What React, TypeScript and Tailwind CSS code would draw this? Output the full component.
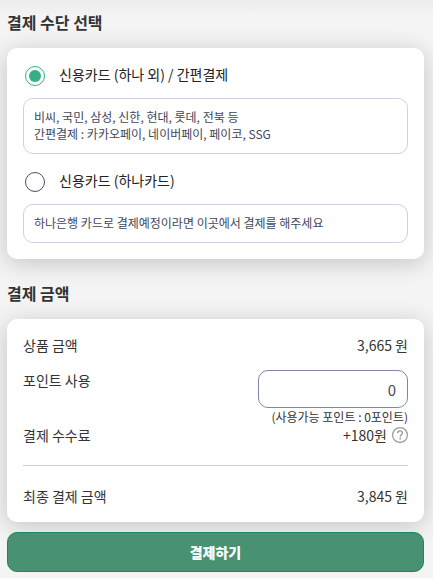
import { useState } from "react";

const methods = [
  {
    id: "general",
    label: "신용카드 (하나 외) / 간편결제",
    lines: [
      "비씨, 국민, 삼성, 신한, 현대, 롯데, 전북 등",
      "간편결제 : 카카오페이, 네이버페이, 페이코, SSG",
    ],
  },
  {
    id: "hana",
    label: "신용카드 (하나카드)",
    lines: ["하나은행 카드로 결제예정이라면 이곳에서 결제를 해주세요"],
  },
];

function PaymentMethods() {
  const [selected, setSelected] = useState("general");
  return (
    <section>
      <h2 className="text-base leading-6 font-bold">결제 수단 선택</h2>
      <div className="mt-3.5 flex flex-col gap-4 rounded-[10px] bg-white p-4 shadow-[0_4px_24px_rgba(0,0,0,0.2)]">
        {methods.map((method) => (
          <div key={method.id} className="flex flex-col gap-2.5">
            <label className="flex h-6 items-center gap-3.5 pl-0.5 text-sm leading-5 text-[#222]">
              <input
                type="radio"
                name="method"
                value={method.id}
                checked={selected === method.id}
                onChange={() => setSelected(method.id)}
                className="grid size-5 shrink-0 appearance-none place-items-center rounded-full border border-[#4a4b68] before:size-3 before:rounded-full checked:border-[#38ae87] checked:before:bg-[#38ae87]"
              />
              <span className="pb-1">{method.label}</span>
            </label>
            <div className="rounded-[10px] border border-[#cbd2e3] px-2.5 pt-[9px] pb-[11px] text-xs leading-[17px] text-[#42475a]">
              {method.lines.map((line) => (
                <p key={line}>{line}</p>
              ))}
            </div>
          </div>
        ))}
      </div>
    </section>
  );
}

function HelpButton() {
  return (
    <button type="button" aria-label="결제 수수료 안내" className="text-[#999]">
      <svg viewBox="0 0 16 16" className="size-4" fill="none" stroke="currentColor">
        <circle cx="8" cy="8" r="7.4" strokeWidth="1.2" />
        <path d="M5.6 6.1C5.6 4.6 6.6 3.9 8 3.9s2.4.8 2.4 2.1c0 1.6-2.2 1.8-2.2 3.7" strokeWidth="1.4" />
        <path d="M8.2 10.8v1.6" strokeWidth="1.6" />
      </svg>
    </button>
  );
}

function PaymentAmount() {
  const [points, setPoints] = useState("0");
  return (
    <section>
      <h2 className="text-base leading-6 font-bold">결제 금액</h2>
      <div className="mt-3.5 rounded-[10px] bg-white p-4 text-sm leading-5 shadow-[0_4px_24px_rgba(0,0,0,0.2)]">
        <div className="flex justify-between">
          <span>상품 금액</span>
          <span>3,665 원</span>
        </div>
        <div className="mt-[15px] flex items-start justify-between">
          <label htmlFor="points">포인트 사용</label>
          <div className="flex flex-col items-end">
            <input
              id="points"
              type="text"
              inputMode="numeric"
              value={points}
              onChange={(event) => setPoints(event.target.value)}
              className="h-[38px] w-[150px] rounded-[10px] border border-[#7f86a8] bg-white px-[11px] text-right text-[15px] text-[#4b4b4b]"
            />
            <span className="text-xs leading-[17px]">(사용가능 포인트 : 0포인트)</span>
          </div>
        </div>
        <div className="flex justify-between">
          <span>결제 수수료</span>
          <span className="flex items-center gap-[5px]">
            +180원
            <HelpButton />
          </span>
        </div>
        <hr className="mt-5 mb-5 border-[#c6d0dd]" />
        <div className="flex justify-between">
          <span>최종 결제 금액</span>
          <span>3,845 원</span>
        </div>
      </div>
    </section>
  );
}

export default function App() {
  return (
    <main className="min-h-screen bg-[#f4f4f4] bg-linear-to-b from-[#ebebeb] to-[#f4f4f4] to-[16px] pt-2.5 pr-[9px] pb-1.5 pl-[7px] font-['Noto_Sans_CJK_KR',sans-serif] text-[#333]">
      <form className="flex flex-col gap-[22px]" onSubmit={(event) => event.preventDefault()}>
        <PaymentMethods />
        <div className="flex flex-col gap-2.5">
          <PaymentAmount />
          <button
            type="submit"
            className="relative h-10 rounded-[10px] border border-[#21835f] bg-[#489273] text-sm font-black text-white"
          >
            결제하기
          </button>
        </div>
      </form>
    </main>
  );
}
